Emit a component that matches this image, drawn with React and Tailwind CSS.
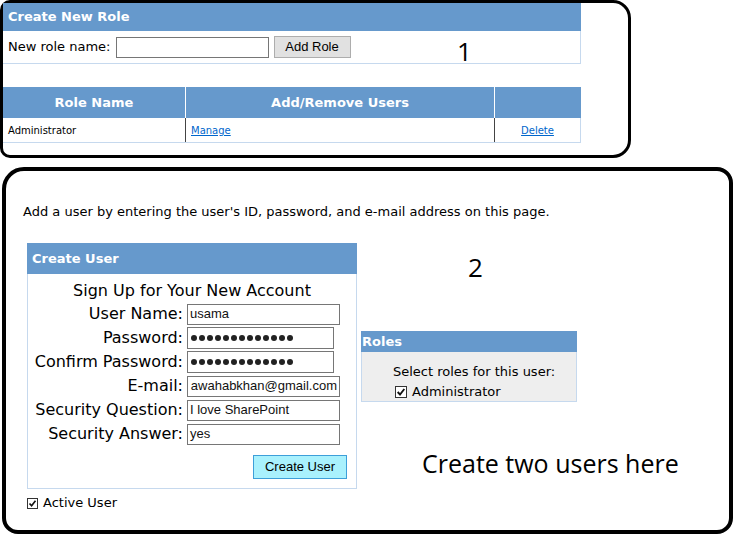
import React from 'react'

const BLUE = 'bg-[#6699cc]'

function Check({ size = 'w-[12px] h-[12px]' }) {
  return (
    <span className={`${size} inline-flex items-center justify-center border border-[#333] bg-white shrink-0`}>
      <svg viewBox="0 0 12 12" className="w-full h-full">
        <path d="M2 6 L4.8 9 L10 2.4" fill="none" stroke="#111" strokeWidth="2.2" />
      </svg>
    </span>
  )
}

function Dots() {
  return (
    <div className="flex gap-[2px] pl-[3px]">
      {Array.from({ length: 13 }).map((_, i) => (
        <span key={i} className="w-[6px] h-[6px] rounded-full bg-[#222]" />
      ))}
    </div>
  )
}

function Field({ label, children, wide = true, tall = false }) {
  return (
    <div className="flex items-center h-[24px]">
      <div className="w-[155px] text-right text-[16px] leading-[20px]">{label}</div>
      <div
        className={`ml-[4px] ${wide ? 'w-[153px]' : 'w-[147px]'} ${tall ? 'h-[22px]' : 'h-[21px]'} border border-[#767676] bg-white flex items-center overflow-hidden whitespace-nowrap text-[13px] font-['Liberation_Sans',Arial,sans-serif] text-[#111]`}
      >
        {children}
      </div>
    </div>
  )
}

export default function App() {
  return (
    <div className="w-[756px] h-[554px] bg-white text-black font-['DejaVu_Sans',Verdana,sans-serif]">
      {/* Frame 1 */}
      <div className="relative w-[631px] h-[158px] border-[3px] border-black rounded-tl-[10px] rounded-bl-[10px] rounded-tr-[18px] rounded-br-[18px]">
        <div className="w-[578px]">
          <div className={`${BLUE} h-[28px] flex items-center px-[5px] text-white font-bold text-[13px]`}>
            Create New Role
          </div>
          <div className="h-[33px] border-r border-b border-[#c6d9ee] flex items-center pl-[5px] text-[13px]">
            <span>New role name:</span>
            <div className="ml-[5px] w-[153px] h-[21px] border border-[#767676] bg-white" />
            <button className="ml-[5px] w-[77px] h-[22px] bg-[#e1e1e1] border border-[#adadad] text-[13px] font-['Liberation_Sans',Arial,sans-serif]">
              Add Role
            </button>
          </div>
        </div>

        <div className="mt-[23px] w-[578px]">
          <div className={`${BLUE} h-[31px] flex text-white font-bold text-[13px]`}>
            <div className="w-[182px] flex items-center justify-center">Role Name</div>
            <div className="w-[309px] border-l border-white flex items-center justify-center">Add/Remove Users</div>
            <div className="flex-1 border-l border-white" />
          </div>
          <div className="h-[25px] flex border-r border-b border-[#c6d9ee] text-[10px]">
            <div className="w-[182px] flex items-center pl-[5px] pt-[1px]">Administrator</div>
            <div className="w-[309px] border-l border-[#444] flex items-center pl-[5px] pt-[1px]">
              <span className="text-[#0066cc] underline">Manage</span>
            </div>
            <div className="flex-1 border-l border-[#444] flex items-center justify-center pt-[1px]">
              <span className="text-[#0066cc] underline">Delete</span>
            </div>
          </div>
        </div>

        <div className="absolute left-[454px] top-[35px] text-[26px] leading-none font-['Open_Sans',sans-serif]">1</div>
      </div>

      {/* Frame 2 */}
      <div className="relative ml-[2px] mt-[9px] w-[731px] h-[367px] border-4 border-black rounded-[16px] rounded-tl-[22px] pl-[17px] pt-[33px]">
        <p className="text-[13px] leading-[16px]">
          Add a user by entering the user's ID, password, and e-mail address on this page.
        </p>

        <div className="flex items-start mt-[23px] ml-[4px]">
          <div className="w-[330px]">
            <div className={`${BLUE} h-[31px] flex items-center pl-[5px] text-white font-bold text-[13px]`}>
              Create User
            </div>
            <div className="border-x border-b border-[#c6d9ee] pt-[6px] pb-[9px]">
              <div className="text-center text-[16px] leading-[22px]">Sign Up for Your New Account</div>
              <Field label="User Name:">
                <span className="pl-[2px]">usama</span>
              </Field>
              <Field label="Password:" wide={false} tall>
                <Dots />
              </Field>
              <Field label="Confirm Password:" wide={false} tall>
                <Dots />
              </Field>
              <Field label="E-mail:">
                <div className="w-full flex justify-end pr-[2px]">
                  <span>awahabkhan@gmail.com</span>
                </div>
              </Field>
              <Field label="Security Question:">
                <span className="pl-[2px]">I love SharePoint</span>
              </Field>
              <Field label="Security Answer:">
                <span className="pl-[2px]">yes</span>
              </Field>
              <div className="flex justify-end pr-[9px] mt-[9px]">
                <button className="w-[94px] h-[24px] bg-[#a9f1fd] border border-[#3d9fd9] text-[13px] font-['Liberation_Sans',Arial,sans-serif]">
                  Create User
                </button>
              </div>
            </div>
          </div>

          <div className="ml-[4px] mt-[88px] w-[216px]">
            <div className={`${BLUE} h-[21px] flex items-center pl-[1px] text-white font-bold text-[13px]`}>
              Roles
            </div>
            <div className="h-[50px] bg-[#eeeeee] border-x border-b border-[#c6d9ee] pl-[31px] pt-[12px] text-[13px]">
              <div className="leading-[16px]">Select roles for this user:</div>
              <div className="flex items-center gap-[5px] ml-[2px] leading-[16px] mt-[4px]">
                <Check />
                <span>Administrator</span>
              </div>
            </div>
          </div>
        </div>

        <div className="flex items-center gap-[5px] ml-[4px] mt-[6px] text-[13px] leading-[16px]">
          <Check size="w-[11px] h-[11px]" />
          <span>Active User</span>
        </div>

        <div className="absolute left-[462px] top-[83px] text-[26px] leading-none font-['Open_Sans',sans-serif]">2</div>
        <div className="absolute left-[416px] top-[280px] text-[25px] leading-none font-['Open_Sans',sans-serif]">
          Create two users here
        </div>
      </div>
    </div>
  )
}
